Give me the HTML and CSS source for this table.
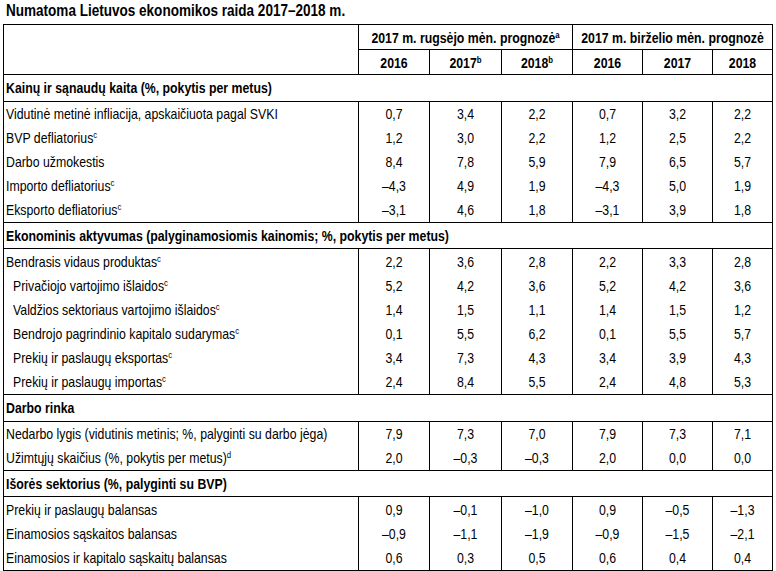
FILE: index.html
```html
<!DOCTYPE html>
<html lang="lt">
<head>
<meta charset="utf-8">
<link rel="stylesheet" href="styles.css">
</head>
<body>
<div class="page">
  <h1 class="title"><span class="w">Numatoma Lietuvos ekonomikos raida 2017–2018 m.</span></h1>
  <table class="tbl">
    <colgroup>
      <col class="c-label"><col class="c71"><col class="c72"><col class="c71"><col class="c70"><col class="c70"><col class="c60">
    </colgroup>
    <thead>
      <tr class="h1r">
        <th rowspan="2" class="empty"></th>
        <th colspan="3"><span class="w">2017 m. rugsėjo mėn. prognozė<sup>a</sup></span></th>
        <th colspan="3"><span class="w">2017 m. birželio mėn. prognozė</span></th>
      </tr>
      <tr class="h2r">
        <th><span class="w">2016</span></th><th><span class="w">2017<sup>b</sup></span></th><th><span class="w">2018<sup>b</sup></span></th>
        <th><span class="w">2016</span></th><th><span class="w">2017</span></th><th><span class="w">2018</span></th>
      </tr>
    </thead>
    <tbody>
      <tr class="sec"><td colspan="7"><span class="w">Kainų ir sąnaudų kaita (%, pokytis per metus)</span></td></tr>
      <tr><td class="lbl"><span class="w">Vidutinė metinė infliacija, apskaičiuota pagal SVKI</span></td><td><span class="w">0,7</span></td><td><span class="w">3,4</span></td><td><span class="w">2,2</span></td><td><span class="w">0,7</span></td><td><span class="w">3,2</span></td><td><span class="w">2,2</span></td></tr>
      <tr><td class="lbl"><span class="w">BVP defliatorius<sup>c</sup></span></td><td><span class="w">1,2</span></td><td><span class="w">3,0</span></td><td><span class="w">2,2</span></td><td><span class="w">1,2</span></td><td><span class="w">2,5</span></td><td><span class="w">2,2</span></td></tr>
      <tr><td class="lbl"><span class="w">Darbo užmokestis</span></td><td><span class="w">8,4</span></td><td><span class="w">7,8</span></td><td><span class="w">5,9</span></td><td><span class="w">7,9</span></td><td><span class="w">6,5</span></td><td><span class="w">5,7</span></td></tr>
      <tr><td class="lbl"><span class="w">Importo defliatorius<sup>c</sup></span></td><td><span class="w">–4,3</span></td><td><span class="w">4,9</span></td><td><span class="w">1,9</span></td><td><span class="w">–4,3</span></td><td><span class="w">5,0</span></td><td><span class="w">1,9</span></td></tr>
      <tr><td class="lbl"><span class="w">Eksporto defliatorius<sup>c</sup></span></td><td><span class="w">–3,1</span></td><td><span class="w">4,6</span></td><td><span class="w">1,8</span></td><td><span class="w">–3,1</span></td><td><span class="w">3,9</span></td><td><span class="w">1,8</span></td></tr>

      <tr class="sec"><td colspan="7"><span class="w">Ekonominis aktyvumas (palyginamosiomis kainomis; %, pokytis per metus)</span></td></tr>
      <tr><td class="lbl"><span class="w">Bendrasis vidaus produktas<sup>c</sup></span></td><td><span class="w">2,2</span></td><td><span class="w">3,6</span></td><td><span class="w">2,8</span></td><td><span class="w">2,2</span></td><td><span class="w">3,3</span></td><td><span class="w">2,8</span></td></tr>
      <tr><td class="lbl sub"><span class="w">Privačiojo vartojimo išlaidos<sup>c</sup></span></td><td><span class="w">5,2</span></td><td><span class="w">4,2</span></td><td><span class="w">3,6</span></td><td><span class="w">5,2</span></td><td><span class="w">4,2</span></td><td><span class="w">3,6</span></td></tr>
      <tr><td class="lbl sub"><span class="w">Valdžios sektoriaus vartojimo išlaidos<sup>c</sup></span></td><td><span class="w">1,4</span></td><td><span class="w">1,5</span></td><td><span class="w">1,1</span></td><td><span class="w">1,4</span></td><td><span class="w">1,5</span></td><td><span class="w">1,2</span></td></tr>
      <tr><td class="lbl sub"><span class="w">Bendrojo pagrindinio kapitalo sudarymas<sup>c</sup></span></td><td><span class="w">0,1</span></td><td><span class="w">5,5</span></td><td><span class="w">6,2</span></td><td><span class="w">0,1</span></td><td><span class="w">5,5</span></td><td><span class="w">5,7</span></td></tr>
      <tr><td class="lbl sub"><span class="w">Prekių ir paslaugų eksportas<sup>c</sup></span></td><td><span class="w">3,4</span></td><td><span class="w">7,3</span></td><td><span class="w">4,3</span></td><td><span class="w">3,4</span></td><td><span class="w">3,9</span></td><td><span class="w">4,3</span></td></tr>
      <tr><td class="lbl sub"><span class="w">Prekių ir paslaugų importas<sup>c</sup></span></td><td><span class="w">2,4</span></td><td><span class="w">8,4</span></td><td><span class="w">5,5</span></td><td><span class="w">2,4</span></td><td><span class="w">4,8</span></td><td><span class="w">5,3</span></td></tr>

      <tr class="sec"><td colspan="7"><span class="w">Darbo rinka</span></td></tr>
      <tr><td class="lbl"><span class="w">Nedarbo lygis (vidutinis metinis; %, palyginti su darbo jėga)</span></td><td><span class="w">7,9</span></td><td><span class="w">7,3</span></td><td><span class="w">7,0</span></td><td><span class="w">7,9</span></td><td><span class="w">7,3</span></td><td><span class="w">7,1</span></td></tr>
      <tr><td class="lbl"><span class="w">Užimtųjų skaičius (%, pokytis per metus)<sup>d</sup></span></td><td><span class="w">2,0</span></td><td><span class="w">–0,3</span></td><td><span class="w">–0,3</span></td><td><span class="w">2,0</span></td><td><span class="w">0,0</span></td><td><span class="w">0,0</span></td></tr>

      <tr class="sec"><td colspan="7"><span class="w">Išorės sektorius (%, palyginti su BVP)</span></td></tr>
      <tr><td class="lbl"><span class="w">Prekių ir paslaugų balansas</span></td><td><span class="w">0,9</span></td><td><span class="w">–0,1</span></td><td><span class="w">–1,0</span></td><td><span class="w">0,9</span></td><td><span class="w">–0,5</span></td><td><span class="w">–1,3</span></td></tr>
      <tr><td class="lbl"><span class="w">Einamosios sąskaitos balansas</span></td><td><span class="w">–0,9</span></td><td><span class="w">–1,1</span></td><td><span class="w">–1,9</span></td><td><span class="w">–0,9</span></td><td><span class="w">–1,5</span></td><td><span class="w">–2,1</span></td></tr>
      <tr><td class="lbl"><span class="w">Einamosios ir kapitalo sąskaitų balansas</span></td><td><span class="w">0,6</span></td><td><span class="w">0,3</span></td><td><span class="w">0,5</span></td><td><span class="w">0,6</span></td><td><span class="w">0,4</span></td><td><span class="w">0,4</span></td></tr>
    </tbody>
  </table>
</div>
</body>
</html>
```

FILE: styles.css
```css
html, body {
  margin: 0;
  padding: 0;
  background: #ffffff;
}
body {
  font-family: "Liberation Sans", Arial, sans-serif;
  color: #000000;
}
.page {
  padding: 0 0 0 3px;
  width: 770px;
}
/* emulate a narrow (condensed) face: lay out at full width, then squeeze */
.w {
  display: block;
  width: calc(100% / 0.82);
  transform: scaleX(0.82);
  transform-origin: 0 50%;
  white-space: nowrap;
}
.title {
  margin: 0;
  padding: 0 0 0 3px;
  height: 24px;
  line-height: 21px;
  font-size: 16.5px;
  font-weight: bold;
}
.tbl {
  border-collapse: collapse;
  table-layout: fixed;
  width: 770px;
  font-size: 15px;
  border: 1px solid #000;
}
.c-label { width: 355px; }
.c71 { width: 71px; }
.c72 { width: 72px; }
.c70 { width: 70px; }
.c60 { width: 60px; }
.tbl th {
  border: 1px solid #000;
  font-weight: bold;
  text-align: center;
  height: 24px;
  padding: 0;
  line-height: 17px;
}
.tbl td {
  padding: 0;
  height: 24.1px;
  text-align: center;
  border-left: 1px solid #000;
  border-right: 1px solid #000;
  line-height: 17px;
}
.tbl td.lbl {
  text-align: left;
  padding-left: 2px;
}
.tbl td.sub {
  padding-left: 9px;
}
.tbl tr.sec td {
  border: 1px solid #000;
  text-align: left;
  font-weight: bold;
  padding-left: 2px;
  height: 25.5px;
}
sup {
  font-size: 9.5px;
  line-height: 0;
  vertical-align: 5px;
}
```
